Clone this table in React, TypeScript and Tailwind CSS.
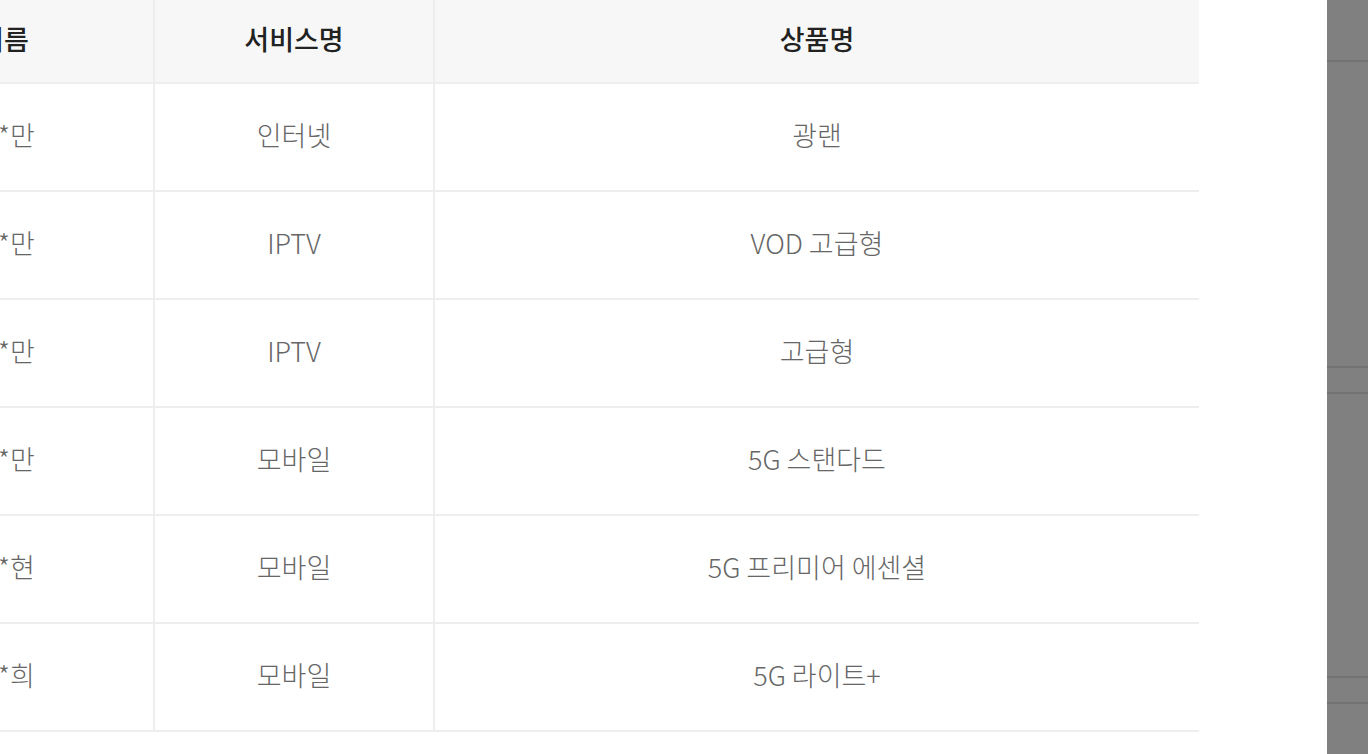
import React from 'react';

const rows = [
  { name: '김*만', service: '인터넷', product: '광랜' },
  { name: '이*만', service: 'IPTV', product: 'VOD 고급형' },
  { name: '박*만', service: 'IPTV', product: '고급형' },
  { name: '최*만', service: '모바일', product: '5G 스탠다드' },
  { name: '정*현', service: '모바일', product: '5G 프리미어 에센셜' },
  { name: '강*희', service: '모바일', product: '5G 라이트+' },
];

const font = { fontFamily: '"Noto Sans CJK KR", "Noto Sans", sans-serif' };

const App: React.FC = () => {
  return (
    <div className="flex w-[1368px] h-[754px] bg-white overflow-hidden" style={font}>
      <div className="w-[1327px] h-full overflow-hidden">
        <div className="ml-[-145px] w-[1344px]">
          <div className="grid grid-cols-[300px_280px_764px] h-[84px] bg-[#f7f7f7] border-b-2 border-[#eeeeee] text-[27px] font-medium text-[#222222]">
            <div className="flex items-center justify-center pb-1 border-r-2 border-[#eeeeee]">이름</div>
            <div className="flex items-center justify-center pb-1 border-r-2 border-[#eeeeee]">서비스명</div>
            <div className="flex items-center justify-center pb-1">상품명</div>
          </div>
          {rows.map((r, i) => (
            <div
              key={i}
              className="grid grid-cols-[300px_280px_764px] h-[108px] border-b-2 border-[#eeeeee] text-[27px] font-light text-[#666666]"
            >
              <div className="flex items-center justify-center pb-1 border-r-2 border-[#eeeeee]">{r.name}</div>
              <div className="flex items-center justify-center pb-1 border-r-2 border-[#eeeeee]">{r.service}</div>
              <div className="flex items-center justify-center pb-1">{r.product}</div>
            </div>
          ))}
        </div>
      </div>
      <div className="w-[41px] h-full flex flex-col bg-[#808080]">
        <div className="h-[62px] border-b-2 border-[#737373]" />
        <div className="h-[306px] border-b-2 border-[#737373]" />
        <div className="h-[26px] border-b-2 border-[#737373]" />
        <div className="h-[284px] border-b-2 border-[#737373]" />
        <div className="h-[26px] border-b-2 border-[#737373]" />
        <div className="flex-1" />
      </div>
    </div>
  );
};

export default App;
